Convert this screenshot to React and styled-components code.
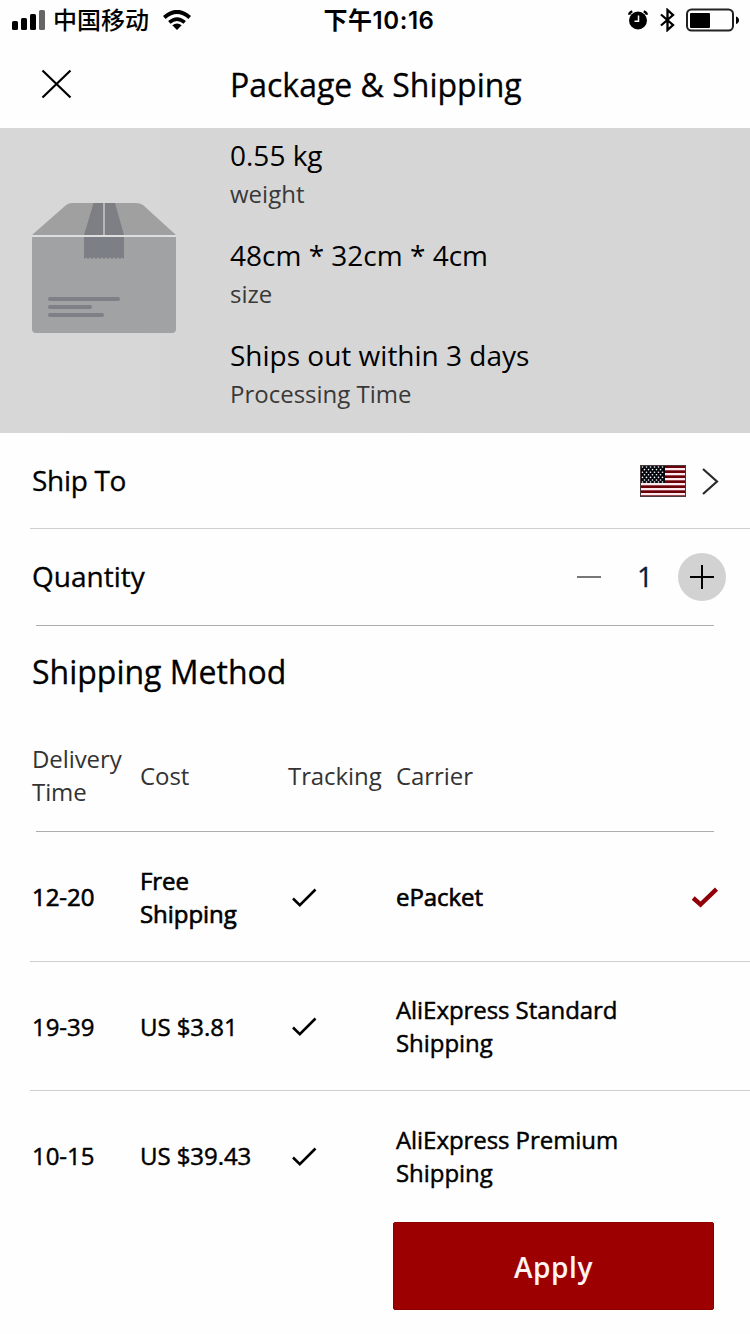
import React from 'react';
import styled, { createGlobalStyle } from 'styled-components';

const Global = createGlobalStyle`
  * { box-sizing: border-box; }
  body { margin: 0; background: #fefefe; }
  svg { display: block; flex: none; }
`;

const Screen = styled.main`
  width: 750px;
  height: 1334px;
  overflow: hidden;
  display: flex;
  flex-direction: column;
  background: #fefefe;
  color: #000;
  font-family: 'Open Sans', 'Noto Sans', sans-serif;
`;

const StatusBar = styled.header`
  height: 40px;
  display: grid;
  grid-template-columns: 1fr auto 1fr;
  align-items: center;
  padding: 0 11px 0 12px;
  font-family: Inter, 'Noto Sans CJK SC', sans-serif;
  font-size: 24px;
  line-height: 40px;
`;

const StatusGroup = styled.div`
  display: flex;
  align-items: center;
  justify-content: ${(p) => (p.$end ? 'flex-end' : 'flex-start')};
  gap: ${(p) => (p.$end ? 11.5 : 0)}px;
`;

const CarrierName = styled.span`
  margin: 0 14px 0 8px;
  padding-top: 2px;
  line-height: 38px;
  font-weight: 500;
`;

const Clock = styled.time`
  font-weight: 600;
  letter-spacing: 0.55px;
  padding: 2px 0 0 7px;
  line-height: 38px;
`;

const TitleBar = styled.div`
  height: 88px;
  display: flex;
  align-items: center;
  padding: 0 0 1px 40px;
`;

const IconButton = styled.button`
  border: 0;
  padding: 0;
  background: none;
  display: flex;
`;

const Title = styled.h1`
  margin: 0 0 0 157px;
  padding-top: 2px;
  font-size: 32px;
  font-weight: 400;
  line-height: 44px;
  white-space: nowrap;
  -webkit-text-stroke: 0.3px #000;
`;

const Summary = styled.section`
  height: 305px;
  display: flex;
  background: linear-gradient(90deg, #d7d7d7, #d5d5d5);
  padding: 0 0 0 32px;
`;

const BoxIcon = styled.div`
  width: 198px;
  padding-top: 75px;
`;

const Facts = styled.dl`
  margin: 0;
  padding-top: 7px;
`;

const Fact = styled.div`
  display: flex;
  flex-direction: column-reverse;
  justify-content: flex-end;
  height: 100px;
`;

const FactName = styled.dt`
  font-size: 24px;
  line-height: 36px;
  color: #393939;
`;

const FactValue = styled.dd`
  margin: 0 0 1px;
  font-size: 28px;
  line-height: 40px;
`;

const OptionRow = styled.div`
  height: ${(p) => p.$height}px;
  margin-left: ${(p) => (p.$inset ? 36 : 30)}px;
  margin-right: ${(p) => (p.$inset ? 36 : 0)}px;
  border-bottom: 1px solid ${(p) => (p.$inset ? '#adadad' : '#cfcfcf')};
  display: flex;
  align-items: center;
  justify-content: space-between;
`;

const OptionLabel = styled.span`
  font-size: 28px;
  line-height: 38px;
  padding-bottom: 2px;
  margin-left: ${(p) => p.$shift}px;
  letter-spacing: ${(p) => p.$tracking || 0}px;
  -webkit-text-stroke: 0.3px #000;
`;

const Destination = styled.div`
  display: flex;
  align-items: center;
  gap: 16px;
  padding-right: 31px;
`;

const Stepper = styled.div`
  display: flex;
  align-items: center;
  margin-right: -12px;
`;

const Count = styled.output`
  width: 77px;
  padding: 0 0 2px 11px;
  text-align: center;
  font-size: 28px;
  line-height: 38px;
  color: #06203a;
  -webkit-text-stroke: 0.3px #06203a;
`;

const PlusButton = styled(IconButton)`
  width: 48px;
  height: 48px;
  border-radius: 50%;
  background: #d2d2d2;
  align-items: center;
  justify-content: center;
`;

const SectionTitle = styled(Title).attrs({ as: 'h2' })`
  margin: 22px 0 0 32px;
  height: 72px;
`;

const Columns = styled.div`
  display: grid;
  grid-template-columns: 108px 148px 108px 295px 1fr;
  align-items: center;
  font-size: 24px;
  line-height: 33px;
`;

const HeadRow = styled(Columns)`
  height: 112px;
  margin: 0 36px;
  border-bottom: 1px solid #adadad;
  color: #333;
`;

const HeadCell = styled.span`
  margin: 0 0 1px -4px;
  white-space: pre-line;
  letter-spacing: -0.08px;
`;

const MethodRow = styled(Columns)`
  height: ${(p) => p.$height}px;
  margin-left: 30px;
  padding-left: 2px;
  border-bottom: ${(p) => (p.$last ? '0' : '1px solid #cfcfcf')};
  -webkit-text-stroke: ${(p) => (p.$strong ? 0.65 : 0.45)}px #000;
`;

const Cell = styled.span`
  white-space: pre-line;
  letter-spacing: -0.06px;
`;

const Mark = styled.span`
  padding-top: 2px;
`;

const Actions = styled.footer`
  display: flex;
  justify-content: flex-end;
  padding: 2px 36px 0 0;
`;

const ApplyButton = styled.button`
  width: 321px;
  height: 88px;
  border: 1px solid #8c0000;
  border-radius: 2px;
  padding: 1px 0 0;
  background: #9d0000;
  color: #fff3f3;
  font: 600 28px/38px 'Open Sans', sans-serif;
  letter-spacing: 0.6px;
`;

const Signal = () => (
  <svg width="33" height="20" viewBox="0 0 33 20">
    <rect x="0" y="11" width="6" height="9" rx="1.5" />
    <rect x="9" y="8" width="6" height="12" rx="1.5" />
    <rect x="18" y="4" width="6" height="16" rx="1.5" />
    <rect x="27" y="0" width="6" height="20" rx="1.5" fill="#666" />
  </svg>
);

const Wifi = () => (
  <svg width="28" height="20" viewBox="0 0 28 20">
    <path d="M14 20 9.300 15.300Q14 11.600 18.700 15.300Z" />
    <path d="M6.300 12.400Q14 5.800 21.700 12.400" fill="none" stroke="#000" strokeWidth="3.700" />
    <path d="M1.300 7.500Q14 -3.800 26.700 7.500" fill="none" stroke="#000" strokeWidth="3.900" />
  </svg>
);

const Alarm = () => (
  <svg width="20" height="20" viewBox="0 0 20 20">
    <circle cx="10" cy="10.500" r="9" />
    <path d="M1.200 4.800Q1.300 2.200 4.300 1.300M18.800 4.800Q18.700 2.200 15.700 1.300" fill="none" stroke="#000" strokeWidth="2.400" />
    <path d="M10.500 5.500V11.300H6.500" fill="none" stroke="#fff" strokeWidth="1.500" />
  </svg>
);

const Bluetooth = () => (
  <svg width="15" height="24" viewBox="0 0 15 24">
    <path d="M1 6.500 13 17 7.500 22V2L13 7 1 17.500" fill="none" stroke="#000" strokeWidth="2.300" />
  </svg>
);

const Battery = () => (
  <svg width="53" height="24" viewBox="0 0 53 24">
    <rect x="1" y="1.500" width="46" height="21" rx="4.500" fill="none" stroke="#222" strokeWidth="2" />
    <rect x="4" y="5" width="20" height="15" rx="1" />
    <path d="M50 8.500Q53 9.500 53 12.200T50 16Z" />
  </svg>
);

const Close = () => (
  <svg width="33" height="30" viewBox="0 0 33 30">
    <path d="M2.500 1.500 30.500 28.500M30.500 1.500 2.500 28.500" stroke="#000" strokeWidth="2.200" />
  </svg>
);

const Parcel = () => (
  <svg width="144" height="130" viewBox="0 0 144 130">
    <path d="M0 32 33 3Q36 0 40 0H104Q108 0 111 2L144 32Z" fill="#a0a0a1" />
    <path d="M0 34H144V126Q144 130 140 130H4Q0 130 0 126Z" fill="#a1a2a3" />
    <path d="M61.500 0H83L92 32H52Z" fill="#7d7f84" />
    <path d="M52 34H92V56l-2-1.500-2 1.500-2-1.500-2 1.500-2-1.500-2 1.500-2-1.500-2 1.500-2-1.500-2 1.500-2-1.500-2 1.500-2-1.500-2 1.500-2-1.500-2 1.500-2-1.500-2 1.500-2-1.500-2 1.500Z" fill="#7c7f85" />
    <path d="M72 0V32" stroke="#b5b5b7" strokeWidth="2" />
    <path d="M0 33H144" stroke="#dedede" strokeWidth="2" />
    <path d="M18 96H86M18 104H58M18 112H70" stroke="#7f8085" strokeWidth="4" strokeLinecap="round" />
  </svg>
);

const stripes = [3, 8, 13, 18, 23, 28];
const starRows = [2, 4.600, 7.200, 9.800, 12.400, 15, 17];

const Flag = () => (
  <svg width="46" height="32" viewBox="0 0 46 32">
    <rect width="46" height="32" fill="#6b0009" />
    {stripes.map((y) => (
      <rect key={y} x="1" y={y} width="44" height="2.300" fill="#fde9ee" />
    ))}
    <rect x="1" y="1" width="24" height="17" fill="#05070f" />
    {starRows.map((y, r) =>
      (r % 2 ? [4.500, 8.500, 12.500, 16.500, 20.500] : [2.500, 6.500, 10.500, 14.500, 18.500, 22.500]).map((x) => (
        <circle key={`${x}-${y}`} cx={x} cy={y} r="0.800" fill="#fff" />
      )),
    )}
    <rect x="0.500" y="0.500" width="45" height="31" fill="none" stroke="#4a3a3c" />
  </svg>
);

const Chevron = () => (
  <svg width="17" height="28" viewBox="0 0 17 28">
    <path d="M1 2 15 14.500 1 27" fill="none" stroke="#2a2a2c" strokeWidth="2.200" />
  </svg>
);

const Minus = () => (
  <svg width="24" height="2" viewBox="0 0 24 2">
    <path d="M0 1H24" stroke="#777" strokeWidth="2" />
  </svg>
);

const Plus = () => (
  <svg width="24" height="24" viewBox="0 0 24 24">
    <path d="M0 12H24M12 0V24" stroke="#000" strokeWidth="2" />
  </svg>
);

const Tracked = () => (
  <svg width="32" height="20" viewBox="0 0 32 20">
    <path d="M5 10.500 11.800 17.200 27.500 1.500" fill="none" stroke="#000" strokeWidth="2.600" />
  </svg>
);

const Selected = () => (
  <svg width="28" height="21" viewBox="0 0 28 21">
    <path d="M2.200 11 9.500 17.500 25.500 2.200" fill="none" stroke="#8f0008" strokeWidth="4.400" />
  </svg>
);

const facts = [
  { name: 'weight', value: '0.55 kg' },
  { name: 'size', value: '48cm * 32cm * 4cm' },
  { name: 'Processing Time', value: 'Ships out within 3 days' },
];

const methods = [
  { time: '12-20', cost: 'Free\nShipping', carrier: 'ePacket', selected: true, height: 130 },
  { time: '19-39', cost: 'US $3.81', carrier: 'AliExpress Standard\nShipping', height: 129 },
  { time: '10-15', cost: 'US $39.43', carrier: 'AliExpress Premium\nShipping', height: 129 },
];

export default function App() {
  return (
    <Screen>
      <Global />
      <StatusBar>
        <StatusGroup>
          <Signal />
          <CarrierName>中国移动</CarrierName>
          <Wifi />
        </StatusGroup>
        <Clock>下午10:16</Clock>
        <StatusGroup $end>
          <Alarm />
          <Bluetooth />
          <Battery />
        </StatusGroup>
      </StatusBar>
      <TitleBar>
        <IconButton aria-label="Close"><Close /></IconButton>
        <Title>Package &amp; Shipping</Title>
      </TitleBar>
      <Summary>
        <BoxIcon><Parcel /></BoxIcon>
        <Facts>
          {facts.map((f) => (
            <Fact key={f.name}>
              <FactName>{f.name}</FactName>
              <FactValue>{f.value}</FactValue>
            </Fact>
          ))}
        </Facts>
      </Summary>
      <OptionRow $height={96}>
        <OptionLabel $shift={2} $tracking={-0.3}>Ship To</OptionLabel>
        <Destination><Flag /><Chevron /></Destination>
      </OptionRow>
      <OptionRow $height={97} $inset>
        <OptionLabel $shift={-4}>Quantity</OptionLabel>
        <Stepper>
          <IconButton aria-label="Decrease"><Minus /></IconButton>
          <Count>1</Count>
          <PlusButton aria-label="Increase"><Plus /></PlusButton>
        </Stepper>
      </OptionRow>
      <SectionTitle>Shipping Method</SectionTitle>
      <HeadRow>
        <HeadCell>{'Delivery\nTime'}</HeadCell>
        <HeadCell>Cost</HeadCell>
        <HeadCell>Tracking</HeadCell>
        <HeadCell>Carrier</HeadCell>
      </HeadRow>
      {methods.map((m, i) => (
        <MethodRow key={m.time} $height={m.height} $strong={m.selected} $last={i === methods.length - 1}>
          <Cell>{m.time}</Cell>
          <Cell>{m.cost}</Cell>
          <Mark><Tracked /></Mark>
          <Cell>{m.carrier}</Cell>
          {m.selected && <Mark><Selected /></Mark>}
        </MethodRow>
      ))}
      <Actions><ApplyButton>Apply</ApplyButton></Actions>
    </Screen>
  );
}
